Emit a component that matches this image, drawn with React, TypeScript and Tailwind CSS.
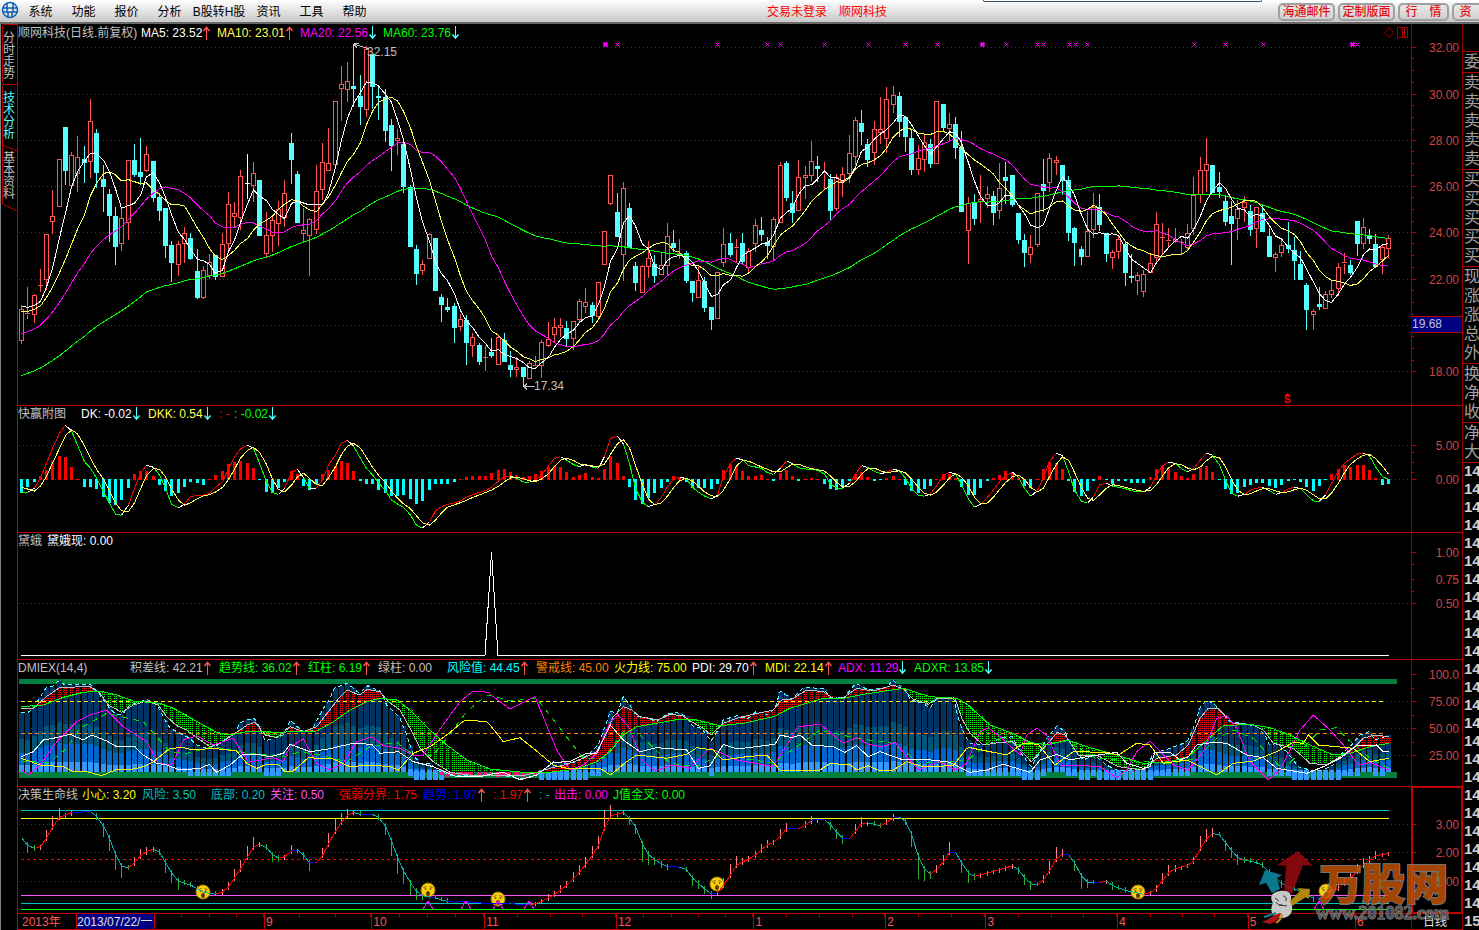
import type { ReactNode } from "react";
import clsx from "clsx";

type Point = [number, number];
type Trace = [originX: number, coords: string][];

const COUNT = 219;
const STEP = 6.27;
const barX = (i: number) => 21 + Math.round(i * STEP);

// kind, high, body top, body bottom, low (screen y)
const candleRows = `r 305 309 341 344;r 287 313 315 319;r 294 295 315 323;r 269 285 286 292;r 234 234 280 290;r 190 216 222 234;r 159 159 207 207;c 127 127 171 185;r 152 155 186 186;r 136 157 174 192
c 146 159 163 183;r 99 121 162 178;c 129 133 173 188;c 165 179 187 212;c 189 194 216 242;c 207 216 247 265;r 209 218 244 251;r 160 160 223 240;c 144 160 175 177;c 138 172 177 185
r 146 154 171 172;c 161 161 198 202;c 193 197 211 221;c 208 208 246 258;c 241 245 263 282;r 241 244 265 276;r 227 233 244 263;c 233 238 259 260;c 249 271 298 299;r 266 270 298 299
r 254 262 276 279;c 255 255 277 280;r 233 244 277 277;r 192 204 244 252;r 202 213 217 227;r 170 176 218 230;w 154 183 184 199;r 162 173 186 202;c 180 180 236 236;r 212 235 254 257
r 217 220 236 252;r 201 209 224 246;r 180 193 218 227;c 133 143 160 184;c 171 174 223 223;r 208 230 234 243;r 218 219 236 276;r 165 191 230 234;r 143 162 190 200;r 128 163 171 171
r 101 101 165 165;r 66 84 89 121;r 62 81 90 102;c 44 86 89 107;c 75 96 107 125;r 46 49 110 117;c 54 54 87 109;c 85 96 98 120;c 89 97 131 142;c 119 125 146 171
r 129 138 141 155;c 142 144 187 193;c 185 187 247 247;c 245 249 274 285;r 260 264 271 275;r 233 234 259 259;c 238 238 291 291;c 294 297 305 322;c 298 307 310 312;c 303 306 328 343
r 314 319 327 331;c 315 320 343 365;r 333 337 346 357;c 343 345 362 365;r 346 357 358 371;c 338 352 356 358;r 336 337 365 365;c 333 340 362 362;c 351 365 370 377;r 357 367 370 377
c 367 367 377 387;r 361 363 379 379;r 356 365 367 369;r 340 342 366 378;r 322 339 346 347;r 318 327 335 343;r 318 325 328 337;c 321 328 339 347;r 321 321 339 350;r 299 301 320 322
r 288 302 307 313;c 302 305 316 323;r 282 282 317 319;r 231 231 265 265;r 175 175 204 205;c 193 212 237 237;r 182 188 255 281;c 203 208 248 248;c 262 266 283 291;r 265 266 293 293
r 241 258 267 278;c 255 264 276 283;r 252 265 275 275;r 223 236 266 276;c 230 243 248 252;r 239 253 255 259;c 251 253 281 283;c 281 281 293 302;r 266 280 298 298;c 277 281 308 312
c 307 307 320 330;r 272 272 319 319;r 228 244 263 267;c 233 243 255 257;r 239 247 249 262;c 233 243 262 265;r 248 251 268 273;r 219 225 244 252;c 217 230 235 241;c 237 242 246 259
r 217 219 247 261;r 162 165 223 223;c 161 163 198 201;c 191 203 213 223;r 160 177 211 211;r 166 175 178 199;r 141 161 176 181;c 156 166 169 182;r 162 172 174 190;c 174 179 211 220
r 174 177 209 211;r 167 174 182 197;r 135 153 174 183;r 117 120 157 165;c 110 123 132 145;c 139 144 160 167;r 121 129 153 165;r 97 129 133 144;r 87 99 139 153;r 86 95 105 113
c 92 96 122 137;c 117 117 137 152;c 130 138 170 175;r 145 158 170 175;r 135 142 160 172;c 139 144 164 168;r 101 101 164 164;c 104 104 128 132;r 113 124 129 141;c 117 124 148 159
c 131 147 212 212;r 197 203 231 264;c 194 202 219 225;r 175 199 202 223;r 186 194 199 208;c 191 196 213 225;r 163 188 211 219;c 162 177 181 204;c 175 175 205 207;c 213 213 240 244
c 234 240 253 267;r 235 247 255 263;r 193 193 245 247;c 159 184 191 212;r 153 158 183 192;r 156 160 163 175;c 165 165 181 195;c 176 180 233 241;c 227 228 243 266;c 246 249 257 265
r 211 231 257 257;r 193 207 230 238;c 194 207 225 231;c 233 233 254 262;r 250 252 258 269;r 236 239 252 259;c 241 244 273 286;c 254 276 278 283;r 272 275 281 295;r 270 274 292 297
r 254 263 273 273;r 212 224 258 263;r 223 237 238 255;r 228 240 242 248;r 228 239 242 243;r 239 242 244 254;r 224 233 248 250;r 177 195 229 235;r 157 170 195 203;r 138 164 171 192
c 165 165 193 193;c 172 187 192 198;c 195 201 222 226;c 201 216 224 265;r 200 209 219 240;r 196 202 208 222;c 205 211 230 236;r 207 207 229 248;c 205 213 232 232;c 228 236 257 257
r 252 254 258 272;r 238 245 253 257;c 222 245 249 253;c 237 250 261 280;c 251 264 280 280;c 283 285 310 330;r 309 311 315 330;c 287 304 307 310;r 291 294 309 309;r 281 290 295 298
r 263 267 289 296;r 253 262 264 274;c 260 265 273 275;c 221 221 244 256;r 218 227 244 249;c 229 235 239 244;c 234 244 267 267;r 245 247 260 274;r 235 238 249 258`;

const candles = candleRows.split(/[;\n]/).map((row) => {
  const [kind, ...n] = row.trim().split(" ");
  const [high, top, bottom, low] = n.map(Number);
  return { kind, high, top, bottom, low };
});

// Closes from before the visible window, so the averages start warm.
const history = [
  ...Array<number>(20).fill(450),
  ...Array<number>(20).fill(343),
  ...Array<number>(10).fill(356),
  ...Array<number>(5).fill(318),
  ...Array<number>(4).fill(305),
];
const closes = [...history, ...candles.map((c) => (c.kind === "c" ? c.bottom : c.top))];

function movingAverage(period: number): Point[] {
  return candles.map((_, i) => {
    const end = history.length + i + 1;
    const sum = closes.slice(end - period, end).reduce((a, b) => a + b, 0);
    return [barX(i) + 0.5, sum / period];
  });
}

const dk = `277 277 265 232 190 145 100 76 93 135 185 205 233 275 310 342 346 315 265 220 196 202 225 265 312 324 312 289 287 286
280 262 245 208 170 146 136 145 190 245 278 283 265 218 208 233 265 264 240 195 165 130 121 138 175 205 225 248 272 300
312 322 345 376 384 365 332 320 313 309 302 292 284 277 272 262 243 230 229 235 246 247 240 225 198 175 170 180 194 200
193 201 205 170 115 109 133 190 265 308 320 313 292 260 237 230 237 262 277 288 297 285 230 190 175 179 197 201 205 218
223 205 182 192 203 207 208 211 222 252 264 264 250 222 197 202 214 221 217 208 212 235 265 286 289 282 258 225 217 222
255 298 322 313 292 270 245 228 217 232 265 289 272 232 185 160 167 215 270 304 310 290 254 250 258 262 266 272 275 276
262 225 197 187 190 206 216 206 180 160 166 195 240 280 289 283 271 265 262 272 283 278 266 262 266 284 303 303 285 250
213 190 176 162 160 167 200 230 238`
  .split(/\s+/)
  .map((v) => 400 + Number(v) / 3);
const dkk = dk.map((v, i) => (v + (dk[i - 1] ?? v - 5) + (dk[i - 2] ?? v - 10)) / 3);

const dkBars = `-43 -25 -10 10 30 55 70 67 37 1 -23 -23 -31 -53 -72 -77 -62 -26 16 25 25 10 -17 -37 -50 -43 -23 -8 -13 -17
1 13 25 47 52 55 49 34 -2 -38 -43 -28 -8 25 16 -20 -32 -15 16 30 42 55 49 25 -7 -16 -16 -32 -43 -52
-50 -47 -59 -74 -65 -32 -14 -16 -14 -8 1 7 10 10 10 20 28 31 22 13 7 10 16 25 37 43 37 22 7 13
19 7 4 31 70 49 10 -23 -62 -74 -56 -41 -26 -8 10 7 -8 -26 -26 -26 -29 -14 28 46 40 25 10 10 13 1
-5 19 28 10 -5 1 4 1 -14 -29 -32 -20 -5 16 22 7 -5 -2 4 10 1 -17 -35 -41 -29 -20 1 16 16 4
-23 -47 -47 -26 -5 4 13 25 22 4 -22 -26 1 31 52 49 31 -7 -38 -50 -35 -7 10 -1 -16 -7 -7 -13 -13 -11
7 31 40 31 22 10 4 16 34 40 22 -4 -29 -44 -41 -23 -17 -13 -11 -20 -26 -17 -5 -2 -8 -23 -35 -20 -2 16
31 43 37 43 43 28 4 -17 -14`
  .split(/\s+/)
  .map((v) => Number(v) / 3);

// Traces are kept as "x,y" pairs in thirds of a pixel, in three stretches.
function readTrace(trace: Trace): Point[] {
  return trace.flatMap(([originX, coords]) =>
    coords.split(" ").map((pair): Point => {
      const [x, y] = pair.split(",").map(Number);
      return [originX + x / 3, 655 + y / 3];
    }),
  );
}

function valueAt(points: Point[], x: number) {
  const next = points.findIndex((p) => p[0] >= x);
  if (next === -1) return points[points.length - 1][1];
  if (next === 0) return points[0][1];
  const [x0, y0] = points[next - 1];
  const [x1, y1] = points[next];
  return y0 + ((y1 - y0) * (x - x0)) / (x1 - x0 || 1);
}

const risk = readTrace([
  [0, "64,172 82,174 100,160 118,130 139,98 157,95 175,78 196,90 271,88 289,105 307,130 325,155 350,180 370,175 390,150 440,133 470,148 490,185 510,220 540,235 570,250 590,270 620,280 650,272 685,245 703,240 721,203 742,195 763,190 778,215 796,258 820,250 850,240 871,196 892,215 910,230 935,228 949,200 970,160 985,140 1003,100 1042,85 1078,115 1103,92 1140,108 1160,150 1175,165 1200,190 1220,240 1240,300 1260,325 1290,325 1310,345 1350,360 1400,360 1440,362"],
  [490, "0,360 40,362 90,372 130,365 160,345 190,320 230,325 260,320 300,295 325,270 345,215 361,168 382,175 400,125 420,150 440,185 470,188 500,200 530,178 560,172 590,185 610,215 635,220 663,258 690,215 700,195 740,182 775,190 800,168 830,180 855,160 871,108 905,132 940,98 1000,100 1020,128 1060,130 1097,85 1135,105 1190,98 1208,75 1245,105 1262,135 1300,145 1320,160 1340,130 1390,125 1405,190 1415,220 1430,250"],
  [970, "0,265 52,270 91,250 127,245 150,290 184,335 205,300 230,250 262,212 285,230 300,265 340,315 373,300 409,330 440,345 480,345 530,340 550,295 600,280 640,265 655,255 670,220 691,155 712,135 735,150 748,165 780,200 820,205 860,215 885,240 898,270 920,265 950,290 985,335 1020,345 1060,345 1090,330 1110,300 1140,275 1170,240 1197,230 1215,255 1237,248 1256,240"],
]);

const spread = readTrace([
  [0, "64,160 100,160 139,125 180,97 270,95 300,115 325,150 365,172 400,150 440,138 475,150 500,185 530,212 560,225 590,248 630,275 660,265 690,245 742,210 765,202 796,240 830,248 871,215 910,230 950,215 985,170 1020,125 1042,105 1078,120 1103,103 1140,110 1165,140 1200,165 1230,220 1260,280 1300,320 1350,352 1420,362"],
  [490, "0,360 100,362 140,352 180,340 230,328 280,310 320,290 345,240 370,185 400,155 425,165 450,185 505,195 540,178 580,183 600,198 640,220 663,240 700,205 740,190 790,178 850,165 875,135 905,133 950,105 1000,110 1030,130 1060,128 1100,100 1150,108 1210,90 1240,102 1270,132 1315,148 1340,132 1395,130 1415,190 1435,225"],
  [970, "0,235 40,270 91,262 127,260 184,320 220,280 262,232 285,240 325,300 380,300 445,335 520,345 560,310 620,300 655,270 690,190 715,160 745,162 790,205 850,210 880,225 910,265 970,280 1020,325 1070,330 1110,305 1150,280 1180,250 1215,240 1256,245"],
]);

const trend = readTrace([
  [0, "64,155 130,150 190,127 250,112 300,108 350,120 400,138 480,145 520,160 560,182 600,205 650,232 690,240 750,228 830,232 950,228 1000,200 1050,165 1100,140 1140,130 1190,135 1230,165 1290,225 1340,270 1400,315 1465,340"],
  [490, "0,342 100,352 180,352 260,342 320,320 360,290 400,240 440,215 500,205 570,192 620,195 690,212 760,205 850,185 900,160 1000,130 1060,130 1120,118 1240,100 1320,125 1400,130 1435,150"],
  [970, "0,155 60,210 127,235 180,262 230,270 290,255 350,275 440,300 520,325 600,320 655,305 700,265 760,212 840,208 900,218 960,240 1020,270 1090,300 1140,295 1200,275 1256,265"],
]);

const pdi = readTrace([
  [0, "64,305 100,290 130,255 160,250 210,238 250,255 275,240 320,258 350,275 405,275 430,300 470,325 500,330 540,345 600,340 628,328 650,352 690,330 725,300 770,298 810,305 850,295 871,268 930,290 985,282 1060,265 1115,268 1140,295 1195,290 1240,320 1300,335 1370,365 1440,365"],
  [490, "0,358 40,352 90,374 140,360 190,322 240,320 290,295 320,295 361,210 400,255 450,290 500,278 590,285 625,340 660,332 700,268 740,282 855,268 871,240 905,248 930,240 965,270 1030,275 1065,292 1100,272 1135,305 1170,290 1240,315 1300,312 1380,322 1435,350"],
  [970, "0,352 50,345 100,328 180,352 210,315 260,298 300,315 350,305 440,292 470,325 520,340 540,335 555,292 600,292 630,315 655,305 680,270 730,262 770,265 830,300 880,308 920,340 1010,355 1060,335 1110,310 1160,272 1220,270 1240,290 1256,288"],
]);

const mdi = readTrace([
  [0, "64,310 120,330 190,335 215,348 260,350 305,362 345,345 400,342 430,335 460,320 510,280 550,278 580,285 640,280 710,288 740,325 770,340 800,328 835,328 855,350 880,348 925,308 1000,312 1050,335 1110,330 1170,335 1195,345 1240,295 1290,275 1340,240 1395,195 1460,200"],
  [490, "0,210 40,260 90,248 130,280 190,330 230,340 330,340 361,360 410,320 440,300 530,310 590,298 620,278 670,285 700,315 770,305 830,300 870,345 990,345 1020,325 1080,330 1100,345 1135,332 1170,348 1210,345 1250,320 1300,335 1390,332 1430,280"],
  [970, "0,278 60,290 110,300 160,265 205,268 255,330 310,290 410,292 445,300 500,265 540,270 580,325 650,315 740,360 790,325 850,318 920,290 970,262 1000,265 1015,240 1045,270 1150,280 1200,320 1256,310"],
]);

const adx = readTrace([
  [0, "64,345 85,360 120,330 170,260 230,200 270,180 320,165 370,215 440,260 475,325 515,330 550,255 590,242 640,270 700,250 745,322 820,308 850,320 870,275 910,252 950,325 990,345 1030,325 1070,260 1115,245 1150,272 1200,280 1240,300 1270,300 1325,215 1380,140 1420,108 1465,112"],
  [490, "0,118 60,162 135,125 200,285 240,345 280,330 320,295 361,200 385,180 415,215 460,320 495,348 550,330 600,340 660,280 740,315 850,335 925,215 990,208 1060,265 1100,248 1135,268 1175,275 1215,262 1285,345 1345,320 1400,345 1430,325"],
  [970, "0,300 30,230 55,218 90,245 150,300 170,240 200,220 230,240 270,330 310,330 390,335 440,368 470,345 500,290 540,258 610,330 655,345 700,290 740,190 770,182 800,220 840,320 895,374 930,345 990,225 1030,180 1080,225 1120,270 1165,330 1200,322 1256,345"],
]);

const adxr = readTrace([
  [0, "64,320 150,322 200,280 240,220 320,175 430,200 510,290 560,295 640,275 745,295 850,305 900,290 960,300 1040,320 1110,275 1190,262 1240,300 1300,300 1340,250 1400,170 1460,120"],
  [490, "0,120 60,138 140,130 210,220 280,310 340,310 400,230 450,240 540,325 620,335 690,300 760,310 850,325 990,225 1100,250 1210,265 1290,325 1400,320"],
  [970, "0,310 70,250 150,270 200,265 290,260 380,310 520,320 600,325 680,310 740,250 790,225 850,250 940,345 1000,280 1050,225 1100,218 1130,250 1200,310 1256,340"],
]);

const life = readTrace([
  [0, "64,548 82,572 100,580 118,578 139,548 157,515 175,488 215,472 275,470 290,485 307,510 325,545 346,600 364,635 382,640 403,622 430,592 460,583 478,592 496,625 514,655 535,680 571,690 610,712 646,718 664,712 685,695 721,640 742,605 760,575 778,568 796,575 817,600 835,610 853,605 871,588 892,585 910,600 928,625 946,626 967,600 985,565 1003,532 1030,490 1045,478 1060,472 1078,478 1115,478 1140,490 1156,515 1174,560 1192,610 1210,650 1231,685 1249,710 1270,725 1300,728 1350,742 1400,740 1450,745"],
  [490, "0,747 60,746 118,750 148,742 190,720 240,682 268,650 300,610 325,570 345,510 361,482 400,472 418,492 439,520 457,570 475,600 500,620 530,635 560,635 585,640 607,670 640,700 665,718 680,715 700,690 740,628 790,605 826,572 853,560 890,520 930,522 965,495 1000,492 1021,510 1045,540 1063,555 1080,550 1110,508 1135,503 1170,513 1210,488 1230,487 1246,500 1264,540 1282,600 1300,640 1320,657 1340,642 1360,620 1378,590 1396,592 1417,630 1435,655"],
  [970, "10,665 60,652 127,632 145,645 166,672 184,690 202,690 223,672 241,640 262,605 280,594 298,600 316,630 334,665 352,682 373,685 409,678 427,692 460,705 520,718 541,712 559,700 600,645 650,632 673,615 690,580 712,545 730,533 748,540 770,570 805,612 870,625 910,665 940,690 980,705 1030,730 1060,725 1090,712 1150,660 1180,628 1215,602 1256,595"],
]);
const lifeY = Array.from({ length: COUNT }, (_, i) => valueAt(life, barX(i)));

const toPoints = (points: Point[]) => points.map(([x, y]) => `${x.toFixed(1)},${y.toFixed(1)}`).join(" ");

function Line({ points, color, dash }: { points: Point[]; color: string; dash?: string }) {
  return <polyline points={toPoints(points)} fill="none" stroke={color} strokeDasharray={dash} />;
}

function Rule({ y, color, dash, from = 21, to = 1389 }: { y: number; color: string; dash?: string; from?: number; to?: number }) {
  return <line x1={from} x2={to} y1={y + 0.5} y2={y + 0.5} stroke={color} strokeDasharray={dash} />;
}

function Grid({ rows }: { rows: number[] }) {
  return rows.map((y) => <Rule key={y} y={y} color="#b80000" dash="1 3" from={19} to={1410} />);
}

type Reading = { text: string; color: string; width: string; arrow?: "up" | "down" };

function TrendArrow({ direction }: { direction: "up" | "down" }) {
  return (
    <svg width="9" height="14" viewBox="0 0 9 14" fill="none" className="shrink-0">
      {direction === "up" ? (
        <>
          <path d="M4.500 14V1" stroke="#ff5454" />
          <path d="M1.500 5L4.500 1.500L7.500 5" stroke="#ff5454" strokeWidth="1.5" />
        </>
      ) : (
        <>
          <path d="M4.500 0V12" stroke="#54ffff" />
          <path d="M1.500 8.500L4.500 12L7.500 8.500" stroke="#54ffff" strokeWidth="1.5" />
        </>
      )}
    </svg>
  );
}

type Tick = { y: number; label?: string; minor?: boolean };

type PanelProps = {
  top: number;
  height: number;
  readings: Reading[];
  ticks: Tick[];
  active?: boolean;
  axisExtra?: ReactNode;
  corner?: ReactNode;
  children: ReactNode;
};

function Panel({ top, height, readings, ticks, active, axisExtra, corner, children }: PanelProps) {
  return (
    <section className="flex min-h-0 min-w-0">
      <div className="relative min-w-0 flex-1 overflow-hidden border-b border-l border-[#c00000]">
        <svg
          viewBox={`18 ${top} 1393 ${height - 1}`}
          preserveAspectRatio="none"
          shapeRendering="crispEdges"
          className="absolute inset-0 h-full w-full"
        >
          {children}
        </svg>
        <div className={clsx("relative flex items-center whitespace-nowrap", corner ? "h-[17px]" : "h-[15px]")}>
          {readings.map((r, i) => (
            <div key={i} className={clsx("flex shrink-0 items-center", r.width)} style={{ color: r.color }}>
              <span>{r.text}</span>
              {r.arrow && <TrendArrow direction={r.arrow} />}
            </div>
          ))}
          {corner}
        </div>
      </div>
      <svg
        viewBox={`1411 ${top} 52 ${height}`}
        preserveAspectRatio="none"
        className="h-full w-[52px] shrink-0 text-xs"
      >
        <path d={`M1411.500 ${top}V${top + height}M1462.500 ${top}V${top + height}`} stroke="#900000" />
        <path d={`M1411 ${top + height - 0.5}H1463`} stroke="#c00000" />
        {ticks.map((t) => (
          <g key={t.y}>
            <path d={`M1411 ${t.y + 0.5}h${t.minor ? 3 : 5}`} stroke="#c00000" />
            {t.label && (
              <text x="1459" y={t.y + 5} textAnchor="end" fill="#d04444">
                {t.label}
              </text>
            )}
          </g>
        ))}
        {active && (
          <rect x="1412" y={top} width="50" height={height - 1} fill="none" stroke="#c00000" strokeWidth="2" />
        )}
        {axisExtra}
      </svg>
    </section>
  );
}

function Candles() {
  return candles.map(({ kind, high, top, bottom, low }, i) => {
    const x = barX(i);
    if (kind === "c") {
      return (
        <g key={i} fill="#54ffff">
          <rect x={x} y={high} width="1" height={low - high} />
          <rect x={x - 2} y={top} width="5" height={Math.max(1, bottom - top)} />
        </g>
      );
    }
    const color = kind === "w" ? "#ffffff" : "#ff5454";
    return (
      <g key={i} fill={color}>
        <rect x={x} y={high} width="1" height={top - high} />
        <rect x={x} y={bottom} width="1" height={low - bottom} />
        {bottom - top < 3 ? (
          <rect x={x - 2} y={top} width="5" height="1" />
        ) : (
          <rect x={x - 1.5} y={top + 0.5} width="4" height={bottom - top - 1} fill="none" stroke={color} />
        )}
      </g>
    );
  });
}

const signalMarks = [605, 617, 717, 767, 780, 824, 868, 905, 937, 982, 1006, 1037, 1043, 1069, 1075, 1087, 1194, 1225, 1263, 1352, 1357];
const strongMarks = [605, 982, 1352];

function PriceChart() {
  return (
    <>
      <Grid rows={[47, 94, 140, 186, 232, 279, 325, 371]} />
      <Candles />
      <Line points={movingAverage(60)} color="#00ff00" />
      <Line points={movingAverage(20)} color="#ff00ff" />
      <Line points={movingAverage(10)} color="#ffff54" />
      <Line points={movingAverage(5)} color="#ffffff" />
      {signalMarks.map((x) => (
        <path
          key={x}
          d={`M${x - 1.5} 42.500l4 4m0 -4l-4 4`}
          stroke="#ff00ff"
          strokeWidth={strongMarks.includes(x) ? 2 : 1}
          shapeRendering="auto"
        />
      ))}
      <path d="M354 44L369 49M354 44l5 -1M354 44l3 4" stroke="#c0c0c0" fill="none" />
      <text x="367" y="56" fill="#c0c0c0" fontSize="12">32.15</text>
      <path d="M524 386.500H535M524 386.500l3 -3M524 386.500l3 3" stroke="#c0c0c0" fill="none" />
      <text x="534" y="390" fill="#c0c0c0" fontSize="12">17.34</text>
      <path d="M1285 395.500l2.500 -2.500l2.500 2.500z" fill="#ff0000" />
      <text x="1284" y="403" fill="#ff0000" fontSize="10" fontWeight="bold">S</text>
    </>
  );
}

function MomentumChart() {
  return (
    <>
      <Grid rows={[445, 479]} />
      {dkBars.map((v, i) => (
        <rect
          key={i}
          x={barX(i) - 1}
          y={v > 0 ? 479.5 - v : 479}
          width="3"
          height={Math.max(1, Math.abs(v))}
          fill={v > 0 ? "#ff0000" : "#00ffff"}
        />
      ))}
      {dk.slice(1).map((y, i) => {
        const rising = y < dk[i];
        const wasRising = i > 0 ? dk[i] < dk[i - 1] : rising;
        const color = rising !== wasRising ? "#ffffff" : rising ? "#ff0000" : "#00ff00";
        return <Line key={i} points={[[barX(i) + 0.5, dk[i]], [barX(i + 1) + 0.5, y]]} color={color} />;
      })}
      <Line points={dkk.map((y, i): Point => [barX(i) + 0.5, y])} color="#ffff54" />
    </>
  );
}

function PulseChart() {
  return (
    <>
      <Grid rows={[603]} />
      <polyline points="21,655.500 485,655.500 491.500,552 498,655.500 1389,655.500" fill="none" stroke="#ffffff" />
    </>
  );
}

const BASE = 772;
const bands = [
  { share: 1, fill: "#003366" },
  { share: 0.55, fill: "#005478" },
  { share: 0.32, fill: "#0066cc" },
];

function RiskBar({ index }: { index: number }) {
  const x = barX(index) - 2;
  const full = BASE - valueAt(risk, barX(index));
  const light = Math.max(2, full * 0.115);
  const drop = full > 36 ? 0 : full > 16 ? 4 : 8;
  if (full < 0) return null;
  return (
    <>
      {bands.map((b) => (
        <rect key={b.share} x={x} y={BASE - full * b.share} width="5" height={full * b.share} fill={b.fill} />
      ))}
      <rect x={x} y={BASE - light} width="5" height={light + drop} fill="#3399ff" />
    </>
  );
}

function DirectionChart() {
  const columns = Array.from({ length: COUNT }, (_, i) => i);
  return (
    <>
      <defs>
        <pattern id="dots-red" width="2" height="2" patternUnits="userSpaceOnUse">
          <rect width="2" height="2" fill="#300818" />
          <rect width="1" height="1" fill="#ff0000" />
        </pattern>
        <pattern id="dots-green" width="2" height="2" patternUnits="userSpaceOnUse">
          <rect width="2" height="2" fill="#001800" />
          <rect width="1" height="1" fill="#00ff00" />
        </pattern>
      </defs>
      <Grid rows={[701, 728, 755]} />
      <rect x="19" y="679" width="1378" height="5" fill="#008040" />
      <rect x="19" y="772" width="1378" height="6" fill="#008040" />
      {columns.map((i) => (
        <RiskBar key={i} index={i} />
      ))}
      {columns.map((i) => {
        const a = valueAt(spread, barX(i));
        const b = valueAt(trend, barX(i));
        return (
          <rect
            key={i}
            x={barX(i) - 2}
            y={Math.min(a, b)}
            width="5"
            height={Math.abs(a - b)}
            fill={a < b ? "url(#dots-red)" : "url(#dots-green)"}
          />
        );
      })}
      {columns.filter((i) => barX(i) > 440 && barX(i) < 540).map((i) => (
        <rect key={i} x={barX(i) - 2} y="772" width={i % 3 ? 5 : 3} height={i % 4 ? 3 : 5} fill="#ff1080" />
      ))}
      <Rule y={701} color="#ffff00" dash="4 3" to={1386} />
      <Rule y={733} color="#ff8000" dash="4 3" to={1386} />
      <Line points={risk} color="#54ffff" dash="4 3" />
      <Line points={spread} color="#c0c0c0" />
      <Line points={trend} color="#00ff00" />
      <Line points={adxr} color="#00e000" dash="6 5" />
      <Line points={adx} color="#ff00ff" />
      <Line points={mdi} color="#ffff00" />
      <Line points={pdi} color="#ffffff" />
    </>
  );
}

function Face({ x, y }: { x: number; y: number }) {
  return (
    <g transform={`translate(${x} ${y})`} shapeRendering="auto">
      <circle r="7" fill="#f8d010" stroke="#a88008" />
      <path d="M-4.500 -2.500l3 -1M4.500 -2.500l-3 -1" stroke="#806000" />
      <circle cx="-2.500" cy="-1" r="1" fill="#806000" />
      <circle cx="2.500" cy="-1" r="1" fill="#806000" />
      <ellipse cy="3.500" rx="2" ry="2.500" fill="#603000" />
    </g>
  );
}

const faces: Point[] = [[203, 892], [428, 890], [498, 899], [717, 884], [1138, 892], [1326, 891]];
const peaks = [428, 466, 498, 529, 1319];

function LifelineChart() {
  return (
    <>
      <Grid rows={[824, 852, 881]} />
      <Rule y={810} color="#00c0c0" />
      <Rule y={818} color="#ffff00" />
      <Rule y={859} color="#ff0000" dash="3 3" />
      <Rule y={895} color="#ff54ff" />
      <Rule y={903} color="#00c0c0" />
      <Rule y={909} color="#00ff00" />
      {lifeY.slice(1).map((y, i) => {
        const slope = y - lifeY[i];
        if (Math.abs(slope) < 0.8) return null;
        return (
          <rect
            key={i}
            x={barX(i + 1)}
            y={slope < 0 ? y + slope : y - 3}
            width="1"
            height={Math.abs(slope) + 3}
            fill={slope < 0 ? "#ff8080" : "#30b030"}
          />
        );
      })}
      {faces.map(([x, y]) => (
        <Face key={x} x={x} y={y} />
      ))}
      {lifeY.slice(1).map((y, i) => {
        const slope = y - lifeY[i];
        const color = Math.abs(slope) < 1 ? "#0000ff" : slope < 0 ? "#ff0000" : "#00b0b0";
        return <Line key={i} points={[[barX(i) + 0.5, lifeY[i]], [barX(i + 1) + 0.5, y]]} color={color} />;
      })}
      {peaks.map((x) => (
        <path key={x} d={`M${x - 5} 909l5 -8l5 8`} fill="none" stroke="#ff00ff" />
      ))}
    </>
  );
}

const priceReadings: Reading[] = [
  { text: "顺网科技(日线.前复权)", color: "#c0c0c0", width: "w-[123px]" },
  { text: "MA5: 23.52", color: "#ffffff", width: "w-[76px]", arrow: "up" },
  { text: "MA10: 23.01", color: "#ffff54", width: "w-[83px]", arrow: "up" },
  { text: "MA20: 22.56", color: "#ff00ff", width: "w-[83px]", arrow: "down" },
  { text: "MA60: 23.76", color: "#00ff00", width: "w-[83px]", arrow: "down" },
];

const momentumReadings: Reading[] = [
  { text: "快赢附图", color: "#c0c0c0", width: "w-[63px]" },
  { text: "DK: -0.02", color: "#ffffff", width: "w-[67px]", arrow: "down" },
  { text: "DKK: 0.54", color: "#ffff54", width: "w-[71px]", arrow: "down" },
  { text: ": -", color: "#ff0000", width: "w-[15px]" },
  { text: ": -0.02", color: "#00ff00", width: "w-[67px]", arrow: "down" },
];

const pulseReadings: Reading[] = [
  { text: "黛蛾", color: "#c0c0c0", width: "w-[29px]" },
  { text: "黛娥现: 0.00", color: "#ffffff", width: "w-[83px]" },
];

const directionReadings: Reading[] = [
  { text: "DMIEX(14,4)", color: "#c0c0c0", width: "w-[112px]" },
  { text: "积差线: 42.21", color: "#c0c0c0", width: "w-[89px]", arrow: "up" },
  { text: "趋势线: 36.02", color: "#00ff00", width: "w-[89px]", arrow: "up" },
  { text: "红柱: 6.19", color: "#00ff00", width: "w-[70px]", arrow: "up" },
  { text: "绿柱: 0.00", color: "#c0c0c0", width: "w-[69px]" },
  { text: "风险值: 44.45", color: "#00ffff", width: "w-[89px]", arrow: "up" },
  { text: "警戒线: 45.00", color: "#ff8000", width: "w-[78px]" },
  { text: "火力线: 75.00", color: "#ffff00", width: "w-[78px]" },
  { text: "PDI: 29.70", color: "#ffffff", width: "w-[73px]", arrow: "up" },
  { text: "MDI: 22.14", color: "#ffff00", width: "w-[73px]", arrow: "up" },
  { text: "ADX: 11.29", color: "#ff00ff", width: "w-[76px]", arrow: "down" },
  { text: "ADXR: 13.85", color: "#00ff00", width: "w-[89px]", arrow: "down" },
];

const lifelineReadings: Reading[] = [
  { text: "决策生命线", color: "#c0c0c0", width: "w-[64px]" },
  { text: "小心: 3.20", color: "#ffff00", width: "w-[60px]" },
  { text: "风险: 3.50", color: "#00c0c0", width: "w-[69px]" },
  { text: "底部: 0.20", color: "#00c0c0", width: "w-[59px]" },
  { text: "关注: 0.50", color: "#ff54ff", width: "w-[69px]" },
  { text: "强弱分界: 1.75", color: "#ff0000", width: "w-[84px]" },
  { text: "趋势: 1.97", color: "#0000ff", width: "w-[70px]", arrow: "up" },
  { text: ": 1.97", color: "#ff0000", width: "w-[46px]", arrow: "up" },
  { text: ": -", color: "#00c0c0", width: "w-[15px]" },
  { text: "出击: 0.00", color: "#ff00ff", width: "w-[59px]" },
  { text: "J值金叉: 0.00", color: "#00ff00", width: "w-[83px]" },
];

const priceTicks: Tick[] = [
  ...[47, 94, 140, 186, 232, 279, 325, 371].map((y, i) => ({
    y,
    label: i === 6 ? undefined : `${32 - i * 2}.00`,
  })),
  ...[47, 94, 140, 186, 232, 279, 325].flatMap((y) => [11, 23, 35].map((d) => ({ y: y + d, minor: true }))),
];

const menus = ["系统", "功能", "报价", "分析", "B股转H股", "资讯", "工具", "帮助"];

function TopBar() {
  return (
    <header className="relative flex h-6 items-center overflow-hidden border-b-2 border-[#686868] bg-linear-to-b from-white to-[#c8c8c8] pt-0.5">
      <svg viewBox="0 0 18 18" className="-mt-1 ml-px h-[18px] w-[18px] shrink-0" fill="none" stroke="#1060b0" strokeWidth="1.5">
        <circle cx="9" cy="9" r="7.500" />
        <path d="M2 7H12V2M2 11H7V17M6 2V7M12 6V11H17M11 17V11H6V7M12 7H16" />
      </svg>
      <nav className="flex shrink-0">
        {menus.map((name) => (
          <button key={name} type="button" className={clsx("text-black", name.length > 2 ? "w-14" : "w-[43px]")}>
            {name}
          </button>
        ))}
      </nav>
      <div className="flex flex-1 justify-center gap-3 text-[#ff0000]">
        <span>交易未登录</span>
        <span>顺网科技</span>
      </div>
      <div className="absolute top-0 right-[217px] h-[2px] w-[279px] rounded-b-sm border-x border-b border-[#305060] bg-white" />
      <div className="-mr-6 flex shrink-0 gap-[3px]">
        {["海通邮件", "定制版面", "行\u3000情", "资\u3000讯"].map((name) => (
          <button
            key={name}
            type="button"
            className={clsx(
              "h-[18px] rounded-[5px] border-2 border-[#a0a0a0] bg-linear-to-b from-[#e8e8e8] to-[#d0d0d0] leading-[14px] font-medium whitespace-pre text-[#e01010]",
              name.length > 3 ? "w-[57px]" : "w-[51px]",
            )}
          >
            {name}
          </button>
        ))}
      </div>
    </header>
  );
}

function ViewTabs() {
  return (
    <nav className="relative flex w-[17px] shrink-0 flex-col items-center border-l border-[#808888]">
      <svg width="16" height="190" viewBox="1 24 16 190" className="absolute top-0 left-0" fill="none" stroke="#c00000">
        <path d="M2.500 82V26L4 24.500H17M2.500 82L4 84.500H17M2.500 87V145L17 151M4 84.500L2.500 87M2.500 145V204L17 211" />
      </svg>
      <button type="button" className="relative mt-2 w-3 leading-3 break-all text-[#c0c0c0]">分时走势</button>
      <button type="button" className="relative mt-3 w-3 leading-3 break-all text-[#54ffff]">技术分析</button>
      <button type="button" className="relative mt-3 w-3 leading-3 break-all text-[#c0c0c0]">基本资料</button>
    </nav>
  );
}

const quoteGroups = ["委", "卖卖卖卖卖", "买买买买买", "现涨涨总外", "换净收", "净大"];
const tradeTimes = [...Array<string>(25).fill("14"), "15"];

function QuoteStrip() {
  return (
    <aside className="w-4 shrink-0 overflow-hidden pt-[27px] text-base text-[#a0a0a0]">
      <div className="border-t border-[#c00000]">
        {quoteGroups.map((group) => (
          <div key={group} className="w-5 border-b border-[#c00000] pt-px leading-[18px]">
            {[...group].map((label, i) => (
              <div key={i} className="h-[19px] pl-px">{label}</div>
            ))}
          </div>
        ))}
      </div>
      {tradeTimes.map((time, i) => (
        <div key={i} className="h-[18px] w-5 pl-px text-[15px] leading-[15px] font-bold text-[#d0d0d0]">{time}</div>
      ))}
    </aside>
  );
}

const months = [
  { label: "", span: 110 },
  { label: "9", span: 107 },
  { label: "10", span: 113 },
  { label: "11", span: 132 },
  { label: "12", span: 138 },
  { label: "1", span: 132 },
  { label: "2", span: 100 },
  { label: "3", span: 132 },
  { label: "4", span: 131 },
  { label: "5", span: 107 },
  { label: "6", span: 55 },
];

function DateAxis() {
  return (
    <footer className="flex h-4 border-b border-l border-[#c00000] leading-4 text-[#ff5454]">
      <div className="w-[58px] shrink-0 pl-1">2013年</div>
      <div className="w-[79px] shrink-0 overflow-hidden border-x border-[#c00000] bg-[#000080] whitespace-nowrap text-[#e0e0e0]">
        2013/07/22/一
      </div>
      {months.map(({ label, span }) => (
        <div
          key={span + label}
          className={clsx("relative min-w-0 basis-0 pl-px", label && "border-l border-[#c00000]")}
          style={{ flexGrow: span }}
        >
          <div className="absolute inset-x-0 top-0 flex h-[3px]">
            {Array.from({ length: Math.floor(span / 27) }, (_, i) => (
              <span key={i} className="flex-1 border-r border-[#c00000]" />
            ))}
          </div>
          {label}
        </div>
      ))}
      <div className="w-[52px] shrink-0 border-x border-[#900000] pl-[11px] text-[#e0e0e0]">日线</div>
    </footer>
  );
}

function Watermark() {
  return (
    <svg
      viewBox="1256 845 200 82"
      className="pointer-events-none absolute right-[23px] bottom-[3px] h-[82px] w-[200px]"
      aria-hidden="true"
    >
      <path d="M1298 851L1313 866L1303 865L1292 894L1284 890L1286 866L1277 865Z" fill="#900810" opacity="0.900" />
      <path d="M1265 870L1282 875L1277 878L1280 889L1272 893L1266 883L1259 885Z" fill="#0c7890" />
      <path d="M1310 889L1297 888L1300 891L1289 902L1292 906L1306 897L1309 899Z" fill="#b08810" />
      <path d="M1280 891C1291 889 1293 897 1290 902C1295 909 1291 918 1282 918C1272 918 1269 911 1273 903C1269 897 1272 892 1280 891Z" fill="#c8c8c8" />
      <path d="M1275 898l4 3M1283 896q4 0 3 5M1279 905l8 1M1276 902q2 4 6 3" stroke="#303030" fill="none" />
      <path d="M1281 913C1275 913 1272 918 1262 922L1270 924C1276 922 1280 918 1281 913Z" fill="#b01018" />
      <path d="M1282 914q-1 6 -6 9" stroke="#c09020" strokeWidth="2" fill="none" />
      <path d="M1264 917l12 -4" stroke="#108098" strokeWidth="2" />
      <text
        x="1319"
        y="900"
        fontSize="43"
        fontWeight="900"
        fill="#c05000"
        stroke="#888888"
        strokeWidth="2"
        opacity="0.850"
        style={{ paintOrder: "stroke" }}
      >
        万股网
      </text>
      <text
        x="1316"
        y="919"
        fontSize="18"
        fontWeight="bold"
        fill="#606060"
        stroke="#a0a0a0"
        strokeWidth="1"
        opacity="0.900"
        style={{ paintOrder: "stroke" }}
        className="font-['Liberation_Serif',serif]"
      >
        www.201082.com
      </text>
    </svg>
  );
}

export default function App() {
  return (
    <div className="relative flex h-screen min-h-[600px] w-full flex-col overflow-hidden bg-black font-['Liberation_Sans','Noto_Sans_CJK_SC',sans-serif] text-xs">
      <TopBar />
      <div className="flex min-h-0 flex-1">
        <ViewTabs />
        <main className="grid min-w-0 flex-1 grid-cols-1 grid-rows-[382fr_127fr_127fr_127fr_127fr_16px]">
          <Panel
            top={24}
            height={382}
            readings={priceReadings}
            ticks={priceTicks}
            corner={
              <svg width="26" height="13" viewBox="0 0 26 13" className="mr-[2px] ml-auto" fill="none" stroke="#a00000">
                <path d="M6 1.500L10.500 6.500L6 11.500L1.500 6.500Z" />
                <path d="M14.500 1.500H24.500V11.500H14.500ZM19.500 1.500V11.500M21.500 1.500V11.500" />
              </svg>
            }
            axisExtra={
              <>
                <rect x="1411" y="316" width="51" height="17" fill="#000080" />
                <path d="M1411 316.500h51M1411 332.500h51" stroke="#c00000" />
                <text x="1412" y="328" fill="#c0c0e0">19.68</text>
              </>
            }
          >
            <PriceChart />
          </Panel>
          <Panel
            top={406}
            height={127}
            readings={momentumReadings}
            ticks={[{ y: 445, label: "5.00" }, { y: 452, minor: true }, { y: 462, minor: true }, { y: 472, minor: true }, { y: 479, label: "0.00" }]}
          >
            <MomentumChart />
          </Panel>
          <Panel
            top={533}
            height={127}
            readings={pulseReadings}
            ticks={[{ y: 552, label: "1.00" }, { y: 564, minor: true }, { y: 579, label: "0.75", minor: true }, { y: 591, minor: true }, { y: 603, label: "0.50" }]}
          >
            <PulseChart />
          </Panel>
          <Panel
            top={660}
            height={127}
            readings={directionReadings}
            ticks={[{ y: 674, label: "100.0" }, { y: 688, minor: true }, { y: 701, label: "75.00" }, { y: 715, minor: true }, { y: 728, label: "50.00" }, { y: 742, minor: true }, { y: 755, label: "25.00" }]}
          >
            <DirectionChart />
          </Panel>
          <Panel
            top={787}
            height={127}
            readings={lifelineReadings}
            active
            ticks={[{ y: 824, label: "3.00" }, { y: 838, minor: true }, { y: 852, label: "2.00" }, { y: 867, minor: true }, { y: 881, label: "1.00" }]}
          >
            <LifelineChart />
          </Panel>
          <DateAxis />
        </main>
        <QuoteStrip />
      </div>
      <Watermark />
    </div>
  );
}
